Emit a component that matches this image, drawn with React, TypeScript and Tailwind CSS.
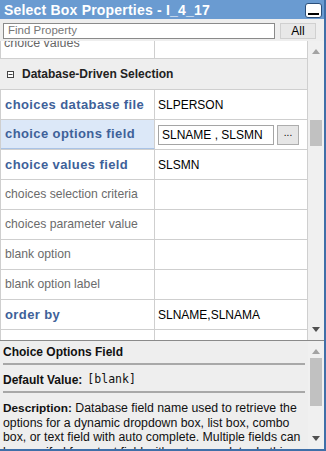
import React from "react";

type Row = { label: string; value?: string; bold?: boolean; active?: boolean };

const rows: Row[] = [
  { label: "choices database file", value: "SLPERSON", bold: true },
  { label: "choice options field", value: "SLNAME , SLSMN", bold: true, active: true },
  { label: "choice values field", value: "SLSMN", bold: true },
  { label: "choices selection criteria" },
  { label: "choices parameter value" },
  { label: "blank option" },
  { label: "blank option label" },
  { label: "order by", value: "SLNAME,SLNAMA", bold: true },
  { label: "max choices", value: "9999", bold: true },
];

function ScrollBar({ thumbTop, thumbHeight }: { thumbTop: number; thumbHeight: number }) {
  return (
    <div className="relative w-[16px] shrink-0 bg-[#f0f0f0]">
      <svg className="absolute left-[4px] top-[8px]" width="8" height="5" viewBox="0 0 8 5">
        <path d="M0 5 L4 0 L8 5 Z" fill="#a3a3a3" />
      </svg>
      <div className="absolute left-[2px] w-[12px] bg-[#c1c1c1]" style={{ top: thumbTop, height: thumbHeight }} />
      <svg className="absolute left-[4px] bottom-[8px]" width="8" height="5" viewBox="0 0 8 5">
        <path d="M0 0 L4 5 L8 0 Z" fill="#505050" />
      </svg>
    </div>
  );
}

export default function App() {
  return (
    <div className="w-[326px] h-[451px] flex flex-col bg-[#eeeeee] border-r-[2px] border-b-[2px] border-[#3f6fa8] font-['Liberation_Sans',Arial,sans-serif] text-[13px] overflow-hidden">
      <div className="h-[19px] shrink-0 bg-[#6a9bd1] flex items-center pl-[4px] pr-[2px]">
        <span className="flex-1 text-white font-bold text-[14px] tracking-[0.2px] leading-none">Select Box Properties - I_4_17</span>
        <div className="w-[17px] h-[15px] mt-[2px] bg-white rounded-[3px] border border-[#2b4f7a] flex items-end justify-center pb-[2px]">
          <div className="w-[11px] h-[2px] bg-black" />
        </div>
      </div>

      <div className="h-[22px] shrink-0 flex items-center pl-[3px] pr-[8px] gap-[5px] bg-[#eeeeee] pt-[1px]">
        <div className="w-[272px] h-[16px] border border-[#8a8a8a] bg-white flex items-center pl-[4px] text-[#777] text-[11.5px]">
          Find Property
        </div>
        <div className="flex-1 h-[16px] bg-[#e8e8e8] border border-[#d0d0d0] flex items-center justify-center text-[12px] text-black">
          All
        </div>
      </div>

      <div className="h-[300px] shrink-0 flex border-b border-[#8a8a8a]">
        <div className="flex-1 overflow-hidden bg-[#eeeeee]">
          <div className="-mt-[12px]">
            <div className="h-[30px] flex bg-white border-b border-l border-[#cfcfcf]">
              <div className="w-[154px] pl-[3px] flex items-center text-[#666] text-[12.5px] border-r border-[#cfcfcf]">choice values</div>
              <div className="flex-1" />
            </div>
            <div className="h-[30px] flex items-center pl-[7px] gap-[8px] font-bold text-[12px] text-[#222] bg-[#eeeeee]">
              <svg width="7" height="7" viewBox="0 0 7 7">
                <rect x="0.5" y="0.5" width="6" height="6" fill="#fff" stroke="#444" />
                <path d="M1.5 3.5 H5.5" stroke="#444" />
              </svg>
              <span>Database-Driven Selection</span>
            </div>
            {rows.map((r) => (
              <div key={r.label} className="h-[30px] flex border-t border-l border-[#cfcfcf] bg-white">
                <div
                  className={`w-[154px] shrink-0 pl-[4px] flex items-center border-r border-[#cfcfcf] ${
                    r.bold ? "font-bold text-[13px] tracking-[0.4px] text-[#3e6199]" : "text-[12.2px] text-[#6b6b6b]"
                  } ${r.active ? "bg-[#dce8f8] border-b border-b-[#a9c3e6]" : ""}`}
                >
                  {r.label}
                </div>
                <div className="flex-1 flex items-center pl-[3px] text-[12px] text-black">
                  {r.active ? (
                    <div className="flex items-center gap-[3px]">
                      <div className="w-[116px] h-[20px] border border-[#a5a5a5] bg-white flex items-center pl-[3px]">
                        {r.value}
                      </div>
                      <div className="w-[22px] h-[20px] border border-[#adadad] bg-[#e6e6e6] flex items-center justify-center text-[10px] leading-none pb-[3px]">
                        ...
                      </div>
                    </div>
                  ) : (
                    r.value
                  )}
                </div>
              </div>
            ))}
          </div>
        </div>
        <div className="w-[1px] bg-[#cfcfcf]" />
        <ScrollBar thumbTop={79} thumbHeight={26} />
      </div>

      <div className="flex-1 flex min-h-0 overflow-hidden">
        <div className="flex-1 pl-[3px] text-[#111] whitespace-nowrap overflow-hidden">
          <div className="h-[24px] flex items-center font-bold text-[12px] border-b-[2px] border-[#a8a8a8] mr-[3px]">Choice Options Field</div>
          <div className="h-[28px] pt-[3px] flex items-center border-b-[2px] border-[#a8a8a8] mr-[3px]">
            <span className="font-bold text-[12px]">Default Value:</span>
            <span className="ml-[5px] font-['DejaVu_Sans_Mono',monospace] text-[11.5px]">[blank]</span>
          </div>
          <p className="pt-[8px] leading-[14.5px] text-[12.3px]">
            <span className="font-bold text-[11.8px]">Description:</span> Database field name used to retrieve the
            <br />
            options for a dynamic dropdown box, list box, combo
            <br />
            box, or text field with auto complete. Multiple fields can
            <br />
            be specifed for a text field with auto complete. In this
          </p>
        </div>
        <ScrollBar thumbTop={17} thumbHeight={48} />
      </div>
    </div>
  );
}
